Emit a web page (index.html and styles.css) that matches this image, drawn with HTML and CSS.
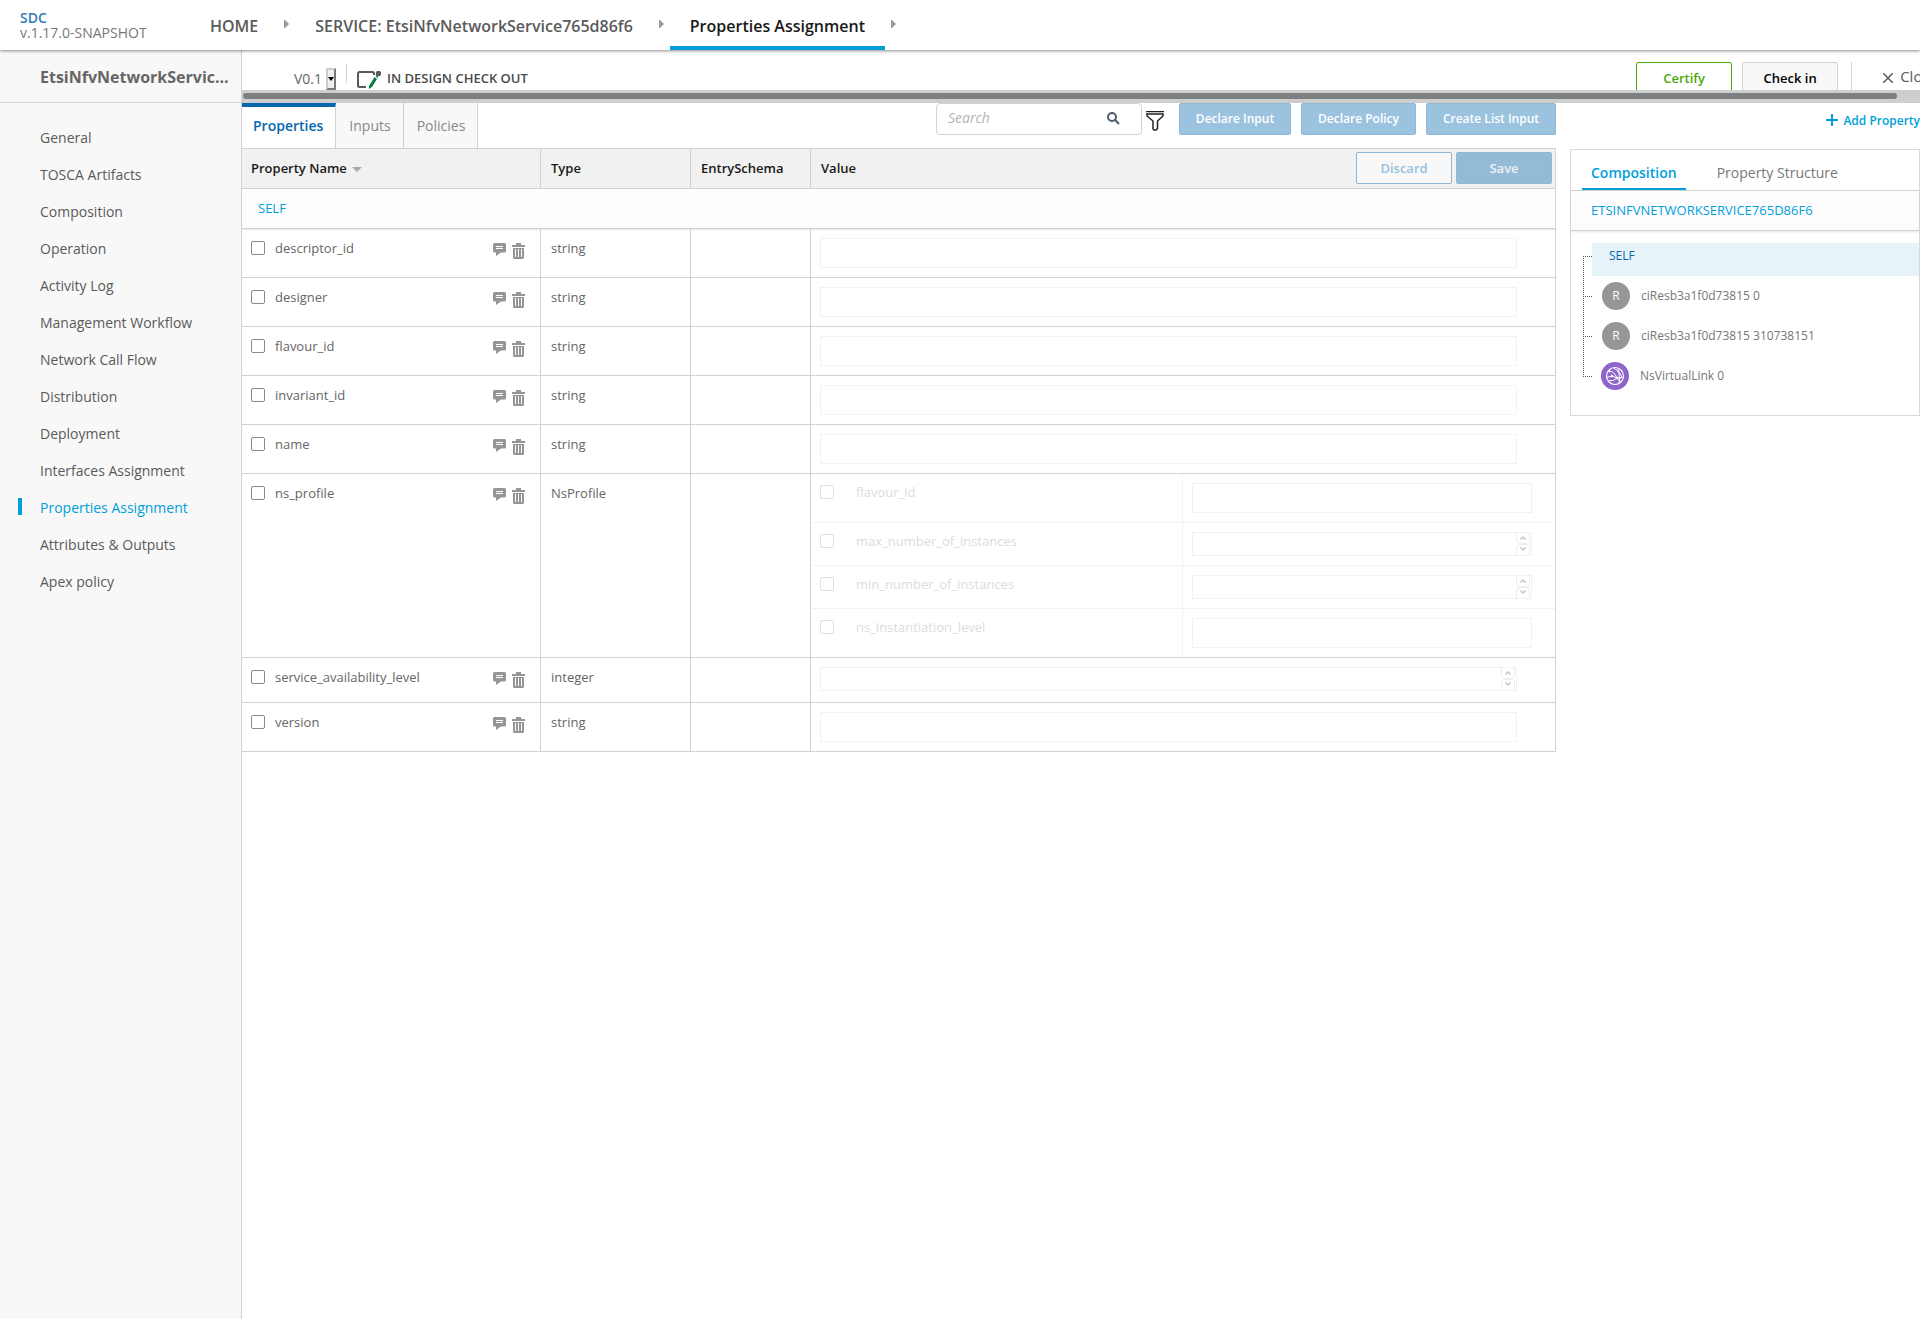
FILE: index.html
```html
<!DOCTYPE html>
<html lang="en">
<head>
<meta charset="utf-8">
<title>SDC - Properties Assignment</title>
<meta name="viewport" content="width=device-width, initial-scale=1">
<link rel="stylesheet" href="styles.css">
</head>
<body>
<svg class="sprite" aria-hidden="true">
  <symbol id="i-comment" viewBox="0 0 13 13"><path fill="currentColor" fill-rule="evenodd" d="M1.500 0h10A1.500 1.500 0 0 1 13 1.500v6.500A1.500 1.500 0 0 1 11.500 9.500H8L3 13V9.500H1.500A1.500 1.500 0 0 1 0 8V1.500A1.500 1.500 0 0 1 1.500 0zM3 3v1h7V3zM3 5v1h7V5z"/></symbol>
  <symbol id="i-trash" viewBox="0 0 13 16"><path fill="currentColor" fill-rule="evenodd" d="M4 0h5v2h4v2H0V2h4zM1 5h11v9.500a1.500 1.500 0 0 1-1.500 1.500h-8A1.500 1.500 0 0 1 1 14.500zM3 6v8h1V6zM6 6v8h1V6zM9 6v8h1V6z"/></symbol>
  <symbol id="i-spin" viewBox="0 0 14 24"><g fill="none" stroke="#ececec"><path d="M.5 0v7q0 4.500 4 4.500h5q4 0 4-4.500V0M.5 24v-7q0-4.500 4-4.500h5q4 0 4 4.500v7"/></g><path fill="none" stroke="#c4c4c4" stroke-width="1.500" d="M4.500 7.500 7 5l2.500 2.500M4.500 15.500 7 18l2.500-2.500"/></symbol>
  <symbol id="i-arrow" viewBox="0 0 5 8"><path fill="#999" d="M0 0h1l4 4-4 4H0z"/></symbol>
</svg>

<header class="top">
  <div class="brand"><a href="#">SDC</a><span>v.1.17.0-SNAPSHOT</span></div>
  <nav class="crumbs" aria-label="Breadcrumb">
    <a href="#">HOME</a><svg class="arrow"><use href="#i-arrow"/></svg>
    <a href="#">SERVICE: EtsiNfvNetworkService765d86f6</a><svg class="arrow"><use href="#i-arrow"/></svg>
    <a href="#" class="current">Properties Assignment</a><svg class="arrow"><use href="#i-arrow"/></svg>
  </nav>
</header>

<div class="shell">
  <aside class="side">
    <h1>EtsiNfvNetworkServic...</h1>
    <nav>
      <a href="#">General</a>
      <a href="#">TOSCA Artifacts</a>
      <a href="#">Composition</a>
      <a href="#">Operation</a>
      <a href="#">Activity Log</a>
      <a href="#">Management Workflow</a>
      <a href="#">Network Call Flow</a>
      <a href="#">Distribution</a>
      <a href="#">Deployment</a>
      <a href="#">Interfaces Assignment</a>
      <a href="#" class="active">Properties Assignment</a>
      <a href="#">Attributes &amp; Outputs</a>
      <a href="#">Apex policy</a>
    </nav>
  </aside>

  <main>
    <div class="statusbar">
      <div class="status">
        <span class="ver">V0.1</span>
        <select class="versel" aria-label="Version"><option></option></select>
        <svg class="verarrow" viewBox="0 0 6 4"><path d="M0 0h6L3 4z"/></svg>
        <span class="rule"></span>
        <svg class="design" viewBox="0 0 24 18"><path fill="none" stroke="#5a5a5a" stroke-width="2" d="M17 4V2.500A1.500 1.500 0 0 0 15.500 1h-13A1.500 1.500 0 0 0 1 2.500v12A1.500 1.500 0 0 0 2.500 16H9"/><path fill="#5a5a5a" d="M20 0h3l1 1v3l-1 1h-3l-1-1V1z"/><path fill="#078044" d="m17.500 6 2.500 2-5 8-3 2v-3zM18.500 5l1-1 2 2-1 1z"/></svg>
        <strong>IN DESIGN CHECK OUT</strong>
        <div class="actions">
          <button type="button" class="certify">Certify</button>
          <button type="button" class="checkin">Check in</button>
          <button type="button" class="close"><svg viewBox="0 0 10 10"><path d="m0 0 10 10M10 0 0 10"/></svg>Close</button>
        </div>
      </div>
    </div>
    <div class="hscroll"><div></div></div>

    <div class="work">
      <section class="props">
        <div class="toolbar">
          <div class="tabs">
            <button type="button" class="on">Properties</button><button type="button">Inputs</button><button type="button">Policies</button>
          </div>
          <div class="tools">
            <label class="search"><input type="text" placeholder="Search" aria-label="Search"><svg viewBox="0 0 13 13"><circle cx="5" cy="5" r="4"/><path d="m8 8 4 4"/></svg></label>
            <svg class="filter" viewBox="0 0 18 20"><path d="M0 .5h18"/><path d="M1 3h16v2l-5.500 5v7.500L10 19H8l-1-1v-8L1 5z"/></svg>
            <button type="button" class="blue b-in">Declare Input</button>
            <button type="button" class="blue b-pol">Declare Policy</button>
            <button type="button" class="blue b-list">Create List Input</button>
          </div>
        </div>
        <table class="grid">
          <colgroup><col class="c-name"><col class="c-type"><col class="c-entry"><col></colgroup>
          <thead><tr>
            <th>Property Name<svg class="sort" viewBox="0 0 10 5"><path d="M0 0h10L5 5z"/></svg></th><th>Type</th><th>EntrySchema</th>
            <th class="val"><div><span>Value</span><button type="button" class="discard">Discard</button><button type="button" class="save">Save</button></div></th>
          </tr></thead>
          <tbody>
            <tr class="group"><td colspan="4">SELF</td></tr>
            <tr><td><div class="name"><input type="checkbox" id="p1"><label for="p1">descriptor_id</label><svg class="cm"><use href="#i-comment"/></svg><svg class="tr"><use href="#i-trash"/></svg></div></td><td>string</td><td></td><td class="v"><input type="text" class="field" aria-label="descriptor_id value" disabled></td></tr>
            <tr><td><div class="name"><input type="checkbox" id="p2"><label for="p2">designer</label><svg class="cm"><use href="#i-comment"/></svg><svg class="tr"><use href="#i-trash"/></svg></div></td><td>string</td><td></td><td class="v"><input type="text" class="field" aria-label="designer value" disabled></td></tr>
            <tr><td><div class="name"><input type="checkbox" id="p3"><label for="p3">flavour_id</label><svg class="cm"><use href="#i-comment"/></svg><svg class="tr"><use href="#i-trash"/></svg></div></td><td>string</td><td></td><td class="v"><input type="text" class="field" aria-label="flavour_id value" disabled></td></tr>
            <tr><td><div class="name"><input type="checkbox" id="p4"><label for="p4">invariant_id</label><svg class="cm"><use href="#i-comment"/></svg><svg class="tr"><use href="#i-trash"/></svg></div></td><td>string</td><td></td><td class="v"><input type="text" class="field" aria-label="invariant_id value" disabled></td></tr>
            <tr><td><div class="name"><input type="checkbox" id="p5"><label for="p5">name</label><svg class="cm"><use href="#i-comment"/></svg><svg class="tr"><use href="#i-trash"/></svg></div></td><td>string</td><td></td><td class="v"><input type="text" class="field" aria-label="name value" disabled></td></tr>
            <tr><td><div class="name"><input type="checkbox" id="p6"><label for="p6">ns_profile</label><svg class="cm"><use href="#i-comment"/></svg><svg class="tr"><use href="#i-trash"/></svg></div></td><td>NsProfile</td><td></td>
              <td class="nest">
                <div class="sub"><div class="subname"><input type="checkbox" id="s1" disabled><label for="s1">flavour_id</label></div><div class="subval"><input type="text" class="field" aria-label="flavour_id value" disabled></div></div>
                <div class="sub"><div class="subname"><input type="checkbox" id="s2" disabled><label for="s2">max_number_of_instances</label></div><div class="subval"><div class="num"><input type="number" class="field" aria-label="max_number_of_instances value" disabled><svg><use href="#i-spin"/></svg></div></div></div>
                <div class="sub"><div class="subname"><input type="checkbox" id="s3" disabled><label for="s3">min_number_of_instances</label></div><div class="subval"><div class="num"><input type="number" class="field" aria-label="min_number_of_instances value" disabled><svg><use href="#i-spin"/></svg></div></div></div>
                <div class="sub"><div class="subname"><input type="checkbox" id="s4" disabled><label for="s4">ns_instantiation_level</label></div><div class="subval"><input type="text" class="field" aria-label="ns_instantiation_level value" disabled></div></div>
              </td></tr>
            <tr class="short"><td><div class="name"><input type="checkbox" id="p7"><label for="p7">service_availability_level</label><svg class="cm"><use href="#i-comment"/></svg><svg class="tr"><use href="#i-trash"/></svg></div></td><td>integer</td><td></td><td class="v"><div class="num"><input type="number" class="field" aria-label="service_availability_level value" disabled><svg><use href="#i-spin"/></svg></div></td></tr>
            <tr><td><div class="name"><input type="checkbox" id="p8"><label for="p8">version</label><svg class="cm"><use href="#i-comment"/></svg><svg class="tr"><use href="#i-trash"/></svg></div></td><td>string</td><td></td><td class="v"><input type="text" class="field" aria-label="version value" disabled></td></tr>
          </tbody>
        </table>
      </section>

      <section class="right">
        <div class="addrow"><a href="#"><svg viewBox="0 0 12 12"><path d="M6 0v12M0 6h12"/></svg>Add Property</a></div>
        <div class="panel">
          <div class="ptabs"><button type="button" class="on">Composition</button><button type="button">Property Structure</button></div>
          <div class="ptitle">ETSINFVNETWORKSERVICE765D86F6</div>
          <ul class="tree">
            <li class="self"><a href="#">SELF</a></li>
            <li><span class="dot">R</span>ciResb3a1f0d73815 0</li>
            <li><span class="dot">R</span>ciResb3a1f0d73815 310738151</li>
            <li class="last"><span class="dot vl"><svg viewBox="0 0 20 20" fill="none" stroke="#fff"><circle cx="10" cy="10" r="8.500" stroke-width="1.200"/><path d="M1.500 11.500 7 10l5 2 6.500-.5M4 5q5 0 8 7M8.500 2q8 3 5.500 15.500M12.500 2.500q2.500 4.500 4.500 9M4 14.500q4 1.500 8-2.500l3.500 4"/><g fill="#fff" stroke="none"><circle cx="4.500" cy="5.500" r="1"/><circle cx="7" cy="10" r="1.200"/><circle cx="12" cy="12" r="1.300"/></g></svg></span>NsVirtualLink 0</li>
          </ul>
        </div>
      </section>
    </div>
  </main>
</div>
</body>
</html>
```
FILE: styles.css
```css
* { box-sizing: border-box; }
body { margin: 0; font: 13px/18px "Open Sans", sans-serif; color: #666; background: #fff; overflow-x: hidden; }
a { color: inherit; text-decoration: none; }
button, input, select { font: inherit; margin: 0; }
button { cursor: pointer; padding: 0; }
svg { display: block; flex: none; }
.sprite { position: absolute; width: 0; height: 0; }

.top { display: flex; height: 50px; background: #fff; position: relative; z-index: 1; box-shadow: 0 1px 3px rgba(0,0,0,.45); }
.brand { width: 190px; flex: none; padding: 10px 0 0 20px; display: flex; flex-direction: column; font-size: 14px; line-height: 15px; font-weight: 600; color: #8c8c8c; }
.brand a { color: #337ab7; }
.brand span { font-weight: 400; color: #777; }
.crumbs { display: flex; white-space: nowrap; }
.crumbs a { padding: 0 20px; font-size: 16px; line-height: 52px; height: 50px; font-weight: 600; color: #5a5a5a; }
.crumbs .current { color: #191919; border-bottom: 4px solid #009fdb; }
.arrow { width: 5px; height: 8px; margin: 20px 6px 0; }

.shell { display: flex; min-height: calc(100vh - 50px); }
.side { width: 242px; flex: none; background: #f8f8f8; border-right: 1px solid #d2d2d2; }
.side h1 { margin: 0; height: 53px; padding: 2px 0 0 40px; border-bottom: 1px solid #d2d2d2; font-size: 16px; line-height: 50px; font-weight: 700; color: #666; white-space: nowrap; }
.side nav { padding-top: 16px; }
.side nav a { display: block; height: 37px; padding-left: 40px; font-size: 14px; line-height: 37px; color: #5a5a5a; }
.side nav .active { color: #009fdb; display: flex; align-items: center; padding-left: 18px; }
.side nav .active::before { content: ""; width: 4px; height: 17px; margin: 0 18px 2px 0; background: #009fdb; }

main { flex: 1; min-width: 0; }
.statusbar { height: 40px; overflow: hidden; }
.status { display: flex; align-items: flex-start; width: calc(100% + 18px); padding: 12px 0 0 52px; white-space: nowrap; }
.ver { font-size: 14px; line-height: 34px; width: 32px; }
.versel { appearance: none; width: 10px; height: 22px; margin-top: 6px; padding: 0; background: #efefef; border: 2px outset #ccc; border-radius: 0; }
.verarrow { width: 6px; height: 4px; margin: 15px 0 0 -8px; }
.rule { width: 1px; height: 19px; margin: 2px 10px 0 12px; background: #d2d2d2; }
.design { width: 24px; height: 18px; margin: 9px 6px 0 0; }
.status strong { line-height: 33px; font-weight: 600; color: #4a4a4a; }
.actions { margin-left: auto; display: flex; }
.actions button { height: 32px; background: #fff; }
.certify, .checkin { width: 96px; margin-right: 10px; border: 1px solid #4ca90c; border-radius: 2px; font-weight: 600; color: #4ca90c; }
.actions .checkin { margin-right: 13px; border-color: #d2d2d2; background: #f8f8f8; color: #000; }
.close { display: flex; border: 0; border-left: 1px solid #d2d2d2; padding: 3px 0 0 31px; font-size: 15px; color: #5a5a5a; line-height: 22px; }
.close svg { width: 10px; height: 10px; margin: 8px 7px 0 0; stroke: #5a5a5a; stroke-width: 1.500; }
.hscroll { height: 13px; padding: 3px 23px 4px 1px; background: #cecece; }
.hscroll div { height: 6px; border-radius: 3px; background: #7c8080; }

.work { display: flex; gap: 14px; }
.props { flex: 1; min-width: 0; }
.toolbar { display: flex; justify-content: space-between; height: 45px; }
.tabs { display: flex; }
.tabs button { height: 45px; padding: 0 12px 0 13px; font-size: 14px; border: 0; border-right: 1px solid #d2d2d2; background: #f8f8f8; color: #888; }
.tabs .on { padding: 0 12px 4px 11px; border-top: 4px solid #0568ae; background: #fff; color: #0568ae; font-weight: 600; }
.tools { display: flex; }
.search { display: flex; width: 206px; height: 32px; border: 1px solid #d2d2d2; border-radius: 4px; padding: 0 21px 0 11px; }
.search input { flex: 1; min-width: 0; border: 0; padding: 0; outline: 0; font-size: 14px; line-height: 28px; font-style: italic; height: 28px; background: transparent; }
.search input::placeholder { color: #b4b4b4; }
.search svg { width: 13px; height: 13px; margin-top: 8px; fill: none; stroke: #4a5c6c; stroke-width: 2; }
.filter { width: 18px; height: 20px; margin: 8px 15px 0 4px; fill: none; stroke: #222; stroke-width: 1.500; }
.blue { height: 32px; border: 1px solid #8fb8d6; border-radius: 2px; background: #9bc3df; color: #fff; font-size: 12px; font-weight: 600; }
.b-in { width: 112px; margin-right: 10px; }
.b-pol { width: 115px; margin-right: 10px; }
.b-list { width: 130px; }

.grid { width: 100%; table-layout: fixed; border-collapse: separate; border-spacing: 0; border-top: 1px solid #d2d2d2; }
.c-name { width: 299px; }
.c-type { width: 150px; }
.c-entry { width: 120px; }
.grid th, .grid td { border-right: 1px solid #d2d2d2; border-bottom: 1px solid #d2d2d2; text-align: left; vertical-align: top; }
.grid th { height: 40px; padding: 0 10px 2px; vertical-align: middle; background: #f1f1f1; font-weight: 600; color: #191919; }
.grid th:first-child { padding-left: 9px; }
.sort { display: inline-block; width: 10px; height: 5px; margin-left: 5px; vertical-align: 1px; fill: #aaa; }
.grid .val { padding-right: 3px; }
.val div { display: flex; gap: 4px; align-items: center; }
.val span { flex: 1; }
.val button { width: 96px; height: 32px; border: 1px solid #8fb8d6; border-radius: 2px; background: #f8f8f8; color: #97bfdc; font-weight: 600; }
.val .save { background: #93bad6; color: #f1f1f1; }
.grid td { height: 49px; padding: 10px 10px 0; }
.grid .group td { height: 40px; padding: 0 16px 2px; vertical-align: middle; background: #fdfdfd; color: #009fdb; box-shadow: 0 1px 1px rgba(0,0,0,.08); }
.grid .short td { height: 45px; }
.name { display: flex; align-items: flex-start; margin: 0 5px 0 -1px; }
.name label { flex: 1; }
input[type=checkbox] { appearance: none; flex: none; width: 14px; height: 14px; margin: 2px 10px 0 0; border: 1px solid #888; border-radius: 2px; background: #fff; }
.cm { width: 13px; height: 13px; margin: 4px 6px 0 0; color: #959595; }
.tr { width: 13px; height: 16px; margin-top: 4px; color: #959595; }
.grid .v { padding: 9px 38px 0 9px; }
.field { display: block; width: 100%; height: 30px; border: 1px solid #f2f2f2; background: #fff; padding: 0 8px; }
.num { position: relative; }
.num .field { height: 24px; appearance: textfield; }
.num svg { position: absolute; right: 2px; top: 0; width: 14px; height: 24px; }
.grid .nest { padding: 0; }
.sub { display: flex; border-bottom: 1px solid #f2f2f2; }
.sub:last-child { border-bottom: 0; }
.subname, .subval { width: 50%; padding: 9px; }
.subname { display: flex; border-right: 1px solid #f2f2f2; color: #dcdcdc; }
.subname input[type=checkbox] { margin-right: 22px; border-color: #e0e0e0; }
.subval { padding-right: 23px; }

.right { width: 350px; flex: none; }
.addrow { height: 46px; padding-top: 9px; display: flex; justify-content: flex-end; color: #009fdb; font-size: 12px; font-weight: 600; }
.addrow a { display: flex; white-space: nowrap; }
.addrow svg { width: 12px; height: 12px; margin: 2px 5px 0 0; stroke: #009fdb; stroke-width: 2; }
.panel { border: 1px solid #d9d9d9; min-height: 267px; }
.ptabs { display: flex; height: 41px; border-bottom: 1px solid #d2d2d2; padding-left: 11px; gap: 22px; }
.ptabs button { border: 0; background: none; padding: 6px 9px 0; font-size: 14px; color: #777; height: 40px; }
.ptabs .on { color: #009fdb; font-weight: 600; border-bottom: 2px solid #009fdb; padding-top: 8px; }
.ptitle { height: 40px; padding-left: 20px; line-height: 38px; background: #fdfdfd; border-bottom: 1px solid #d2d2d2; box-shadow: 0 1px 2px rgba(0,0,0,.1); color: #009fdb; }
.tree { list-style: none; margin: 12px 0 0 12px; padding: 0; font-size: 12px; }
.tree li { position: relative; display: flex; align-items: center; height: 40px; padding-left: 19px; color: #777; }
.tree li::before { content: ""; position: absolute; left: 0; top: -20px; width: 8px; height: 40px; border-left: 1px dotted #555; border-bottom: 1px dotted #555; }
.tree .self { height: 33px; padding: 0; }
.tree .self::before { top: 13px; height: 20px; border-bottom: 0; border-top: 1px dotted #555; }
.self a { flex: 1; height: 33px; margin-left: 9px; padding: 4px 17px; background: #e6f4fa; color: #0568ae; }
.dot { display: flex; align-items: center; justify-content: center; width: 28px; height: 28px; margin-right: 11px; border-radius: 50%; background: #969696; color: #fff; }
.vl { background: #9063cd; }
.vl svg { width: 20px; height: 20px; }
.tree .last { padding-left: 18px; }
```
